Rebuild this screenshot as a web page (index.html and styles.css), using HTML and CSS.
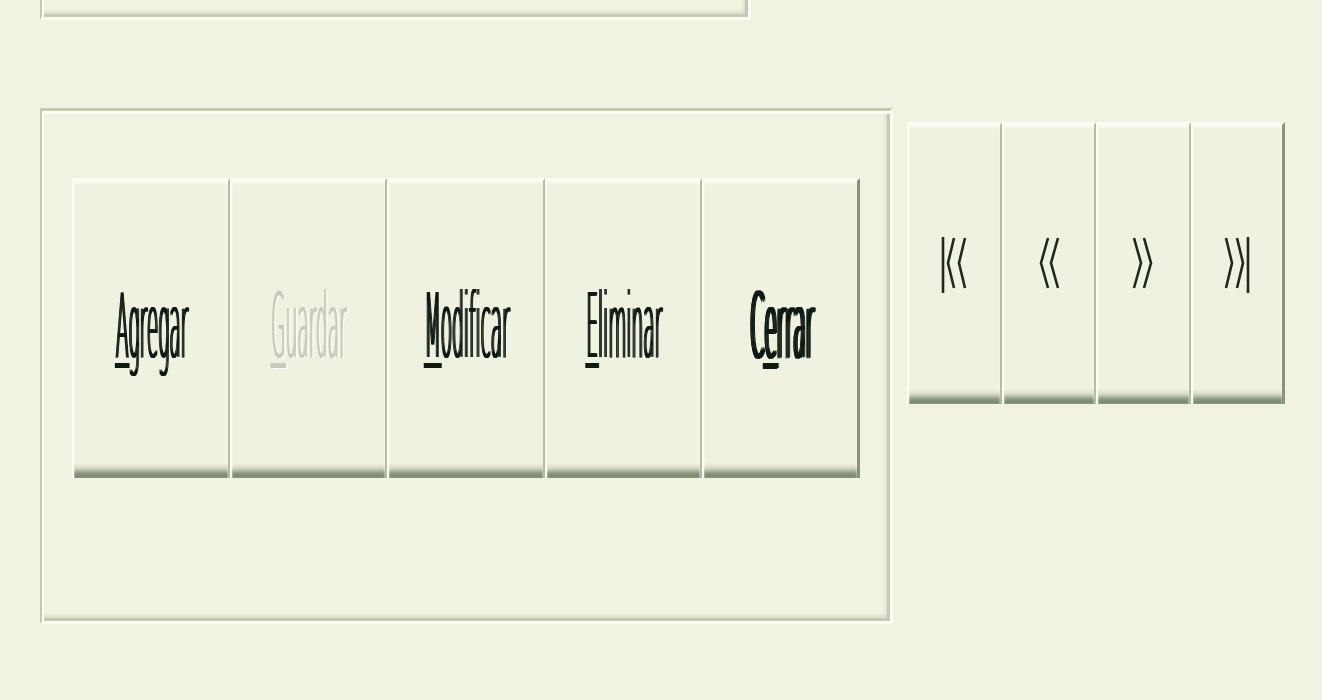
FILE: index.html
```html
<!DOCTYPE html>
<html lang="es">
<head>
    <meta charset="UTF-8">
    <title>Mantenimiento</title>
    <link rel="stylesheet" href="styles.css">
</head>
<body>
    <div class="page">
        <!-- panel de arriba (solo se ve el borde) -->
        <div class="panel panel-top"></div>

        <div class="row">
            <!-- Botones de acciones -->
            <div class="panel panel-main">
                <div class="toolbar">
                    <button class="btn"><span class="cap"><u>A</u>gregar</span></button>
                    <button class="btn disabled" disabled><span class="cap"><u>G</u>uardar</span></button>
                    <button class="btn"><span class="cap"><u>M</u>odificar</span></button>
                    <button class="btn"><span class="cap"><u>E</u>liminar</span></button>
                    <button class="btn default"><span class="cap">C<u>e</u>rrar</span></button>
                </div>
            </div>

            <!-- Navegacion de registros -->
            <div class="nav">
                <button class="btn nav-btn" title="|<<">
                    <svg width="26" height="58" viewBox="0 0 26 58"><path d="M2 1V57M13 2L7 27L13 52M24 2L18 27L24 52"/></svg>
                </button>
                <button class="btn nav-btn" title="<<">
                    <svg width="22" height="58" viewBox="0 0 22 58"><path d="M10 2L3 27L10 52M20 2L13 27L20 52"/></svg>
                </button>
                <button class="btn nav-btn" title=">>">
                    <svg width="22" height="58" viewBox="0 0 22 58"><path d="M2 2L9 27L2 52M12 2L19 27L12 52"/></svg>
                </button>
                <button class="btn nav-btn" title=">>|">
                    <svg width="26" height="58" viewBox="0 0 26 58"><path d="M2 2L8 27L2 52M13 2L19 27L13 52M24 1V57"/></svg>
                </button>
            </div>
        </div>
    </div>
</body>
</html>
```

FILE: styles.css
```css
body {
    margin: 0;
    background-color: #f1f3e2;
    font-family: "Liberation Sans", Arial, sans-serif;
}
.page {
    padding-left: 40px;
}
.panel {
    box-sizing: border-box;
    border-style: solid;
    border-width: 3px 3px 3px 2px;
    border-color: #c4c9b2 #fdfdf7 #fdfdf7 #c4c9b2;
    box-shadow: inset 2px 3px 0 #fcfdf6, inset -3px -3px 0 #c4c9b2, inset -5px -6px 3px #dde1cd;
}
.panel-top {
    width: 711px;
    height: 60px;
    margin-top: -40px;
}
.row {
    display: flex;
    align-items: flex-start;
    margin-top: 88px;
}
.panel-main {
    width: 853px;
    height: 516px;
    padding: 67px 0 0 30px;
}
.toolbar {
    display: grid;
    grid-template-columns: repeat(5, 157.6px);
    height: 300px;
}
.nav {
    display: grid;
    grid-template-columns: repeat(4, 94.5px);
    height: 282px;
    margin: 14px 0 0 14px;
}
.btn {
    appearance: none;
    margin: 0;
    padding: 0 0 7px;
    border: 0;
    border-top: 3px solid #fbfcf4;
    border-left: 2px solid #fbfcf4;
    border-right: 2px solid #b6bba6;
    box-shadow: inset 0 2px 2px #fbfcf4;
    background: linear-gradient(to bottom, #f0f2e1 calc(100% - 15px), #d6dbc6 calc(100% - 10px), #8d9b83 calc(100% - 5px), #7a8a70 calc(100% - 2px), #8a987f 100%);
    display: flex;
    align-items: center;
    justify-content: center;
    color: #0f1a14;
    font: inherit;
}
.btn:last-child {
    border-right: 3px solid #86947b;
}
/* texto muy angosto y alto, como en la captura */
.cap {
    display: inline-block;
    font-family: "DejaVu Sans", sans-serif;
    font-size: 89px;
    font-weight: 200;
    line-height: 1;
    white-space: nowrap;
    transform: scaleX(0.208);
    text-shadow: 3px 0 0 currentColor, 6px 0 0 currentColor, 9px 0 0 currentColor;
}
.cap u {
    text-decoration-thickness: 5px;
    text-underline-offset: 6px;
}
.disabled {
    color: #c9ccbb;
}
.disabled .cap {
    text-shadow: 3px 0 0 #c9ccbb, 6px 0 0 #c9ccbb, 12px 1px 0 #ffffff;
}
.default .cap {
    transform: scaleX(0.226);
    text-shadow: 3px 0 0 currentColor, 6px 0 0 currentColor, 9px 0 0 currentColor, 12px 0 0 currentColor, 15px 0 0 currentColor, 0 1px 0 currentColor, 9px 1px 0 currentColor;
}
.nav-btn {
    padding: 0;
}
.nav-btn svg {
    fill: none;
    stroke: #1c2a22;
    stroke-width: 2.6;
}
```
